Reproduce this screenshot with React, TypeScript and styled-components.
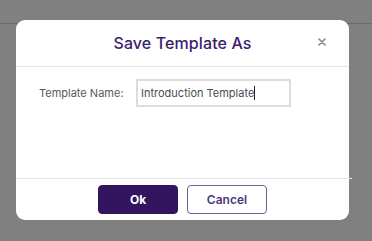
import styled, { createGlobalStyle } from "styled-components";

const Global = createGlobalStyle`
    html, body {
        margin: 0;
        padding: 0;
        background: #808080;
        font-family: "Inter", "Liberation Sans", sans-serif;
    }
`;

const Page = styled.div`
    position: relative;
    width: 372px;
    height: 241px;
    overflow: hidden;
    background: #808080;
`;

const TopBar = styled.div`
    height: 23px;
    border-bottom: 1px solid #6c6c6c;
`;

const Dialog = styled.div`
    position: absolute;
    left: 16px;
    top: 20px;
    width: 333px;
    height: 200px;
    background: #ffffff;
    border-radius: 9px;
    display: flex;
    flex-direction: column;
`;

const Header = styled.div`
    position: relative;
    height: 46px;
    display: flex;
    align-items: center;
    justify-content: center;
    border-bottom: 1px solid #e2e6ec;
`;

const Title = styled.h2`
    margin: 0;
    font-size: 16px;
    font-weight: 500;
    color: #3b1d6e;
    letter-spacing: 0.1px;
`;

const Close = styled.button`
    position: absolute;
    right: 20px;
    top: 15px;
    width: 14px;
    height: 14px;
    padding: 0;
    border: none;
    background: none;
    display: flex;
    align-items: center;
    justify-content: center;
`;

const Body = styled.div`
    flex: 1;
    padding: 12px 0 0 23px;
`;

const Field = styled.div`
    display: flex;
    align-items: center;
`;

const Label = styled.label`
    font-size: 11px;
    color: #555a60;
    width: 97px;
    white-space: nowrap;
`;

const Input = styled.div`
    box-sizing: border-box;
    width: 155px;
    height: 28px;
    border: 2px solid #dcdcdc;
    display: flex;
    align-items: center;
    padding-left: 3px;
    font-size: 11px;
    color: #4a4d52;
    white-space: nowrap;
`;

const Caret = styled.span`
    display: inline-block;
    width: 1px;
    height: 14px;
    background: #222;
`;

const Footer = styled.div`
    height: 42px;
    margin-right: -3px;
    border-top: 1px solid #e2e6ec;
    display: flex;
    justify-content: center;
    align-items: flex-start;
    padding-top: 6px;
    padding-right: 3px;
    gap: 9px;
    box-sizing: border-box;
`;

const Button = styled.button<{ $primary?: boolean }>`
    box-sizing: border-box;
    width: 80px;
    height: 29px;
    border-radius: 4px;
    font-family: "Inter", "Liberation Sans", sans-serif;
    font-size: 12px;
    font-weight: ${(p) => (p.$primary ? 700 : 600)};
    background: ${(p) => (p.$primary ? "#33155f" : "#ffffff")};
    color: ${(p) => (p.$primary ? "#ffffff" : "#4b3a7c")};
    border: 1px solid ${(p) => (p.$primary ? "#33155f" : "#6f5f9a")};
`;

function App() {
    return (
        <Page>
            <Global />
            <TopBar />
            <Dialog>
                <Header>
                    <Title>Save Template As</Title>
                    <Close aria-label="Close">
                        <svg width="8" height="8" viewBox="0 0 8 8">
                            <path d="M1 1L7 7M7 1L1 7" stroke="#858585" strokeWidth="1.6" strokeLinecap="round" />
                        </svg>
                    </Close>
                </Header>
                <Body>
                    <Field>
                        <Label>Template Name:</Label>
                        <Input>
                            Introduction Template
                            <Caret />
                        </Input>
                    </Field>
                </Body>
                <Footer>
                    <Button $primary>Ok</Button>
                    <Button>Cancel</Button>
                </Footer>
            </Dialog>
        </Page>
    );
}

export default App;
